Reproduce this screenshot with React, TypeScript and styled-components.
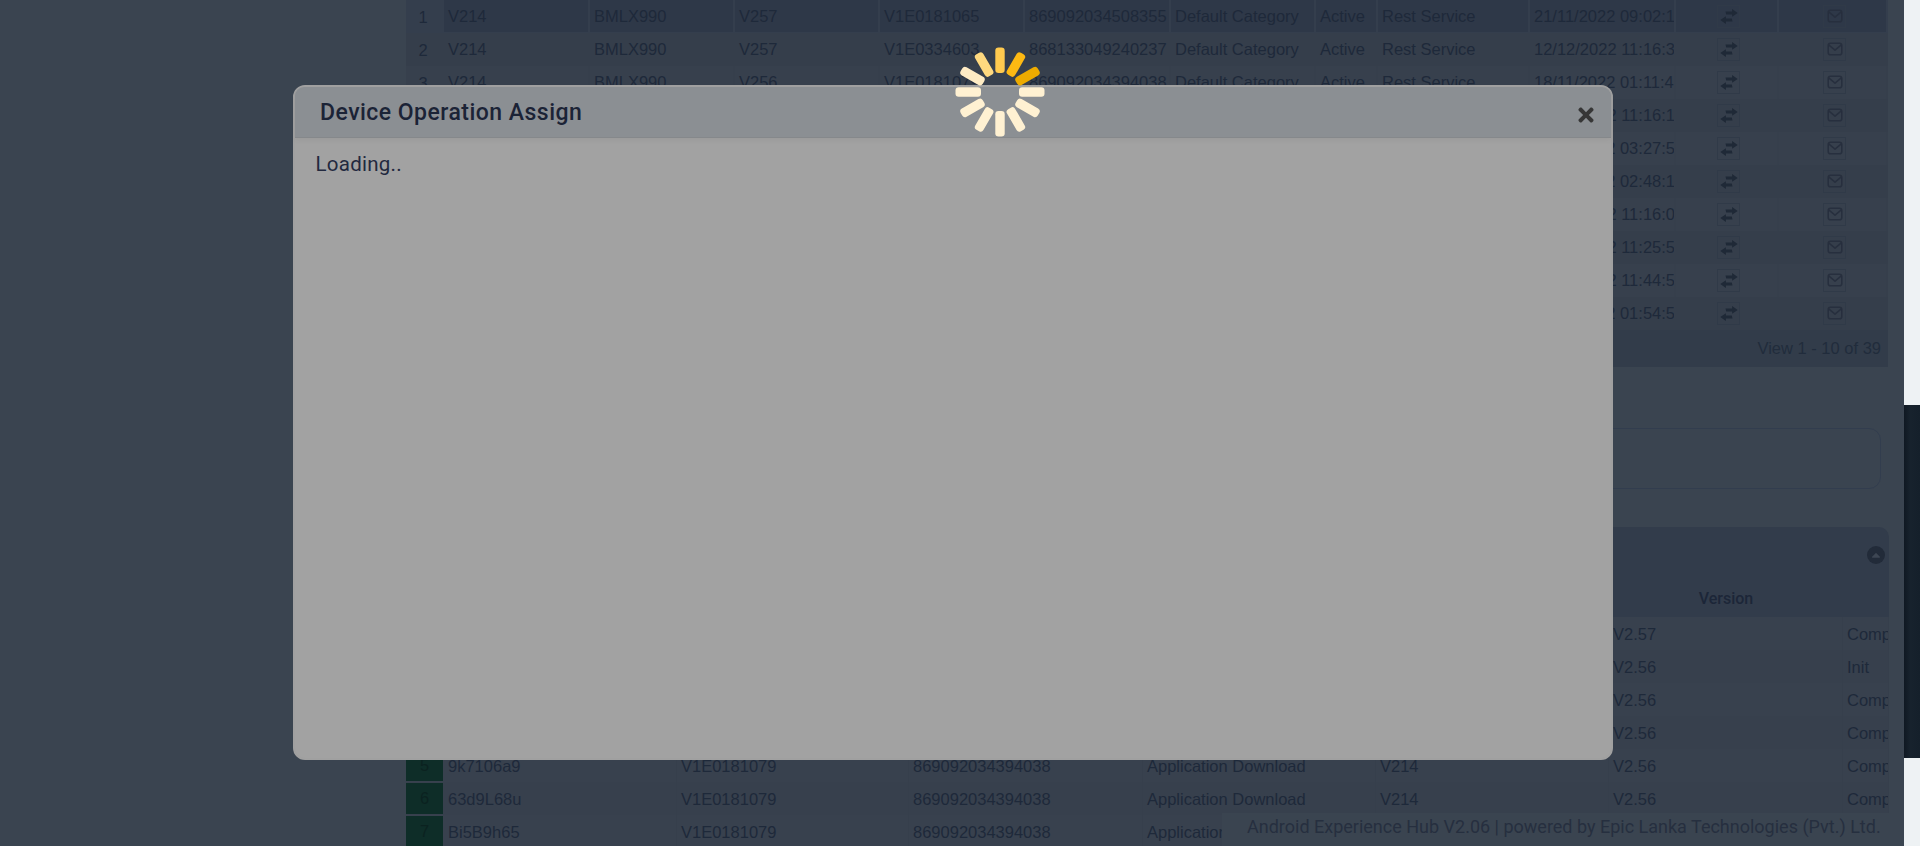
import React from "react";
import styled, { createGlobalStyle } from "styled-components";
import { FaTimes, FaCaretUp } from "react-icons/fa";

const Global = createGlobalStyle`
  html, body { margin: 0; padding: 0; height: 846px; overflow: hidden; background: #eef2f4; }
  #root { height: 846px; }
`;

const Screen = styled.div`
  display: flex;
  width: 1920px;
  height: 846px;
  font-family: "Liberation Sans", Arial, sans-serif;
  font-size: 16.5px;
  color: #1e293a;
`;
const Viewport = styled.div`
  position: relative;
  display: flex;
  width: 1904px;
  height: 846px;
  overflow: hidden;
  background: #3a4450;
`;
const Side = styled.aside`
  flex: 0 0 406px;
`;
const Main = styled.main`
  flex: 0 0 1483px;
  display: flex;
  flex-direction: column;
`;
const Table = styled.section`
  width: 1482px;
`;
const RowOne = styled.div<{ $hover?: boolean; $alt?: boolean }>`
  display: grid;
  grid-template-columns: 38px 146px 145px 145px 145px 146px 145px 62px 152px 146px 103px 109px;
  height: 33px;
  background: ${(p) => (p.$hover ? "#343e4d" : p.$alt ? "#37404d" : "#353e4b")};
`;
const CellOne = styled.div<{ $hover?: boolean; $alt?: boolean }>`
  display: flex;
  align-items: center;
  padding: 1px 0 0 4px;
  height: 33px;
  box-sizing: border-box;
  white-space: nowrap;
  overflow: hidden;
  background: ${(p) => (p.$hover ? "#2e3848" : "transparent")};
  border-right: 2px solid ${(p) => (p.$hover ? "#343e4d" : p.$alt ? "#363f4c" : "transparent")};
  border-bottom: 1px solid ${(p) => (p.$hover ? "#343e4d" : "transparent")};
`;
const NumOne = styled.div`
  display: flex;
  align-items: center;
  justify-content: center;
  padding: 1px 4px 0 0;
`;
const ActionCell = styled(CellOne)<{ $shift: number }>`
  padding: 0 0 0 ${(p) => p.$shift}px;
`;
const IconBox = styled.span`
  display: flex;
  align-items: center;
  justify-content: center;
  width: 23px;
  height: 23px;
  box-sizing: border-box;
  border: 1px solid #303a48;
`;
const Pager = styled.div`
  width: 1482px;
  height: 37px;
  display: flex;
  align-items: center;
  justify-content: flex-end;
  padding-right: 7px;
  box-sizing: border-box;
  background: #323c4a;
  color: #212c3c;
`;
const FilterCard = styled.div`
  margin: 61px 0 0 6px;
  width: 1469px;
  height: 62px;
  box-sizing: border-box;
  border: 1px solid #323d4e;
  border-radius: 12px;
`;
const Panel = styled.section`
  margin-top: 38px;
  width: 1483px;
  overflow: hidden;
`;
const PanelHead = styled.div`
  height: 53px;
  display: flex;
  align-items: center;
  justify-content: flex-end;
  padding: 3px 4px 0 0;
  box-sizing: border-box;
  background: #323c4b;
  border-radius: 10px 10px 0 0;
`;
const Collapse = styled.span`
  display: flex;
  align-items: center;
  justify-content: center;
  width: 18px;
  height: 18px;
  border-radius: 50%;
  background: #222b39;
  color: #3d4653;
  font-size: 14px;
`;
const HeadRow = styled.div`
  display: grid;
  grid-template-columns: 38px 233px 232px 234px 233px 233px 234px 46px;
  height: 37px;
  align-items: center;
  background: #323c4b;
`;
const HeadCell = styled.div`
  text-align: center;
  font-family: Roboto, sans-serif;
  font-weight: 500;
  font-size: 16px;
  color: #1c2638;
`;
const RowTwo = styled.div<{ $alt?: boolean }>`
  display: grid;
  grid-template-columns: 38px 233px 232px 234px 233px 233px 234px 46px;
  height: 33px;
  background: ${(p) => (p.$alt ? "#38414e" : "#37404d")};
`;
const CellTwo = styled.div`
  display: flex;
  align-items: center;
  padding: 1px 0 0 4px;
  white-space: nowrap;
  overflow: hidden;
  border-right: 1px solid #363f4c;
`;
const NumTwo = styled.div`
  display: flex;
  align-items: center;
  justify-content: center;
  width: 37px;
  height: 31px;
  margin-top: 1px;
  background: #0e2d28;
  color: #0b2220;
`;
const Footer = styled.footer`
  position: absolute;
  left: 1222px;
  right: 0;
  bottom: 0;
  height: 33px;
  padding: 0 0 7px 25px;
  box-sizing: border-box;
  display: flex;
  align-items: center;
  background: #3a4450;
  font-family: Roboto, sans-serif;
  font-size: 18px;
  color: #262f3f;
  white-space: nowrap;
`;
const Modal = styled.div`
  position: absolute;
  left: 293px;
  top: 85px;
  width: 1320px;
  height: 675px;
  box-sizing: border-box;
  border: 2px solid #a0a0a0;
  border-radius: 12px;
  background: #a2a2a2;
`;
const ModalHead = styled.div`
  height: 51px;
  display: flex;
  align-items: center;
  justify-content: space-between;
  padding: 0 14px 0 25px;
  background: #8b8f93;
  border-bottom: 1px solid #85888b;
  border-radius: 9px 9px 0 0;
  box-sizing: border-box;
  box-shadow: 0 3px 5px rgba(0, 0, 0, 0.04);
`;
const ModalTitle = styled.h4`
  margin: 1px 0 0;
  font-family: Roboto, sans-serif;
  font-weight: 500;
  font-size: 23px;
  letter-spacing: 0.47px;
  color: #1b2336;
`;
const Close = styled.span`
  display: flex;
  color: #363636;
  font-size: 22px;
  margin-top: 5px;
  stroke: #363636;
  stroke-width: 30px;
`;
const ModalBody = styled.div`
  padding: 14px 20.5px;
  font-family: Roboto, sans-serif;
  font-size: 20.5px;
  line-height: 24px;
  letter-spacing: 0.25px;
  color: #22293f;
`;
const SpinnerWrap = styled.svg`
  position: absolute;
  left: 952px;
  top: 43.5px;
  width: 96px;
  height: 96px;
`;
const ExchangeSvg = styled.svg`
  color: #1f2937;
`;
const MailSvg = styled.svg`
  color: #272f3e;
`;
const Strip = styled.div`
  flex: 0 0 16px;
  display: flex;
  flex-direction: column;
  background: #eef2f4;
`;
const StripDark = styled.div`
  margin-top: 405px;
  height: 353px;
  background: linear-gradient(90deg, #0f1822 0%, #17222d 40%, #15202b 100%);
`;

const rowsOne = [
  ["V257", "V1E0181065", "869092034508355", "21/11/2022 09:02:15"],
  ["V257", "V1E0334603", "868133049240237", "12/12/2022 11:16:32"],
  ["V256", "V1E0181079", "869092034394038", "18/11/2022 01:11:45"],
  ["V257", "V1E0334611", "868133049240310", "12/12/2022 11:16:18"],
  ["V256", "V1E0181042", "869092034508124", "21/11/2022 03:27:51"],
  ["V257", "V1E0181057", "869092034508207", "21/11/2022 02:48:13"],
  ["V257", "V1E0334598", "868133049240187", "12/12/2022 11:16:07"],
  ["V257", "V1E0334587", "868133049240054", "12/12/2022 11:25:54"],
  ["V257", "V1E0334575", "868133049239932", "12/12/2022 11:44:52"],
  ["V256", "V1E0181033", "869092034507993", "21/11/2022 01:54:58"],
];

const rowsTwo = [
  ["x2Tq84pm", "V2.57", "Completed"],
  ["Lw93n7Rb", "V2.56", "Init"],
  ["c8Hd5k1Z", "V2.56", "Completed"],
  ["Pm46fV0s", "V2.56", "Completed"],
  ["9k7106a9", "V2.56", "Completed"],
  ["63d9L68u", "V2.56", "Completed"],
  ["Bi5B9h65", "V2.56", "Completed"],
];

const barColors = [
  "#ffca4f", "#fdb913", "#edab00", "#fff1d2", "#fff1d2", "#fff1d2",
  "#fff1d2", "#fff1d2", "#fff1d2", "#fff1d2", "#ffecc4", "#ffd97f",
];

function Spinner() {
  return (
    <SpinnerWrap viewBox="0 0 96 96">
      {barColors.map((c, i) => (
        <rect key={i} x="43.3" y="3.5" width="9.4" height="25.5" rx="3.2" fill={c} transform={`rotate(${i * 30} 48 48)`} />
      ))}
    </SpinnerWrap>
  );
}

function ExchangeIcon() {
  return (
    <ExchangeSvg width="18" height="15" viewBox="0 0 18 15" fill="currentColor">
      <path d="M5.5 2.4h6.6V0l5.6 3.9-5.6 3.9V5.6H6.2L5.5 2.4z" />
      <path d="M12.5 12.6H5.9V15L0.3 11.1l5.6-3.9v2.2h5.9l.7 3.2z" />
    </ExchangeSvg>
  );
}

function MailIcon() {
  return (
    <MailSvg width="16" height="14" viewBox="0 0 16 14" fill="none" stroke="currentColor" strokeWidth="1.5" strokeLinejoin="round" strokeLinecap="round">
      <rect x="1.2" y="1.2" width="13.6" height="11.6" rx="2.4" />
      <path d="M2 3.2l6 5 6-5" />
    </MailSvg>
  );
}

export default function App() {
  return (
    <Screen>
      <Global />
      <Viewport>
        <Side />
        <Main>
          <Table>
            {rowsOne.map((r, i) => {
              const hover = i === 0;
              const alt = i % 2 === 0 && !hover;
              const tone = { $hover: hover, $alt: alt };
              return (
                <RowOne key={i} {...tone}>
                  <NumOne>{i + 1}</NumOne>
                  <CellOne {...tone}>V214</CellOne>
                  <CellOne {...tone}>BMLX990</CellOne>
                  <CellOne {...tone}>{r[0]}</CellOne>
                  <CellOne {...tone}>{r[1]}</CellOne>
                  <CellOne {...tone}>{r[2]}</CellOne>
                  <CellOne {...tone}>Default Category</CellOne>
                  <CellOne {...tone}>Active</CellOne>
                  <CellOne {...tone}>Rest Service</CellOne>
                  <CellOne {...tone}>{r[3]}</CellOne>
                  <ActionCell {...tone} $shift={41}>
                    <IconBox><ExchangeIcon /></IconBox>
                  </ActionCell>
                  <ActionCell {...tone} $shift={44}>
                    <IconBox><MailIcon /></IconBox>
                  </ActionCell>
                </RowOne>
              );
            })}
          </Table>
          <Pager>View 1 - 10 of 39</Pager>
          <FilterCard />
          <Panel>
            <PanelHead>
              <Collapse><FaCaretUp /></Collapse>
            </PanelHead>
            <HeadRow>
              <HeadCell />
              <HeadCell />
              <HeadCell />
              <HeadCell />
              <HeadCell />
              <HeadCell />
              <HeadCell>Version</HeadCell>
              <HeadCell />
            </HeadRow>
            {rowsTwo.map((r, i) => (
              <RowTwo key={i} $alt={i % 2 === 0}>
                <NumTwo>{i + 1}</NumTwo>
                <CellTwo>{r[0]}</CellTwo>
                <CellTwo>V1E0181079</CellTwo>
                <CellTwo>869092034394038</CellTwo>
                <CellTwo>Application Download</CellTwo>
                <CellTwo>V214</CellTwo>
                <CellTwo>{r[1]}</CellTwo>
                <CellTwo>{r[2]}</CellTwo>
              </RowTwo>
            ))}
          </Panel>
        </Main>
        <Footer>Android Experience Hub V2.06 | powered by Epic Lanka Technologies (Pvt.) Ltd.</Footer>
        <Modal>
          <ModalHead>
            <ModalTitle>Device Operation Assign</ModalTitle>
            <Close><FaTimes /></Close>
          </ModalHead>
          <ModalBody>Loading..</ModalBody>
        </Modal>
        <Spinner />
      </Viewport>
      <Strip>
        <StripDark />
      </Strip>
    </Screen>
  );
}
